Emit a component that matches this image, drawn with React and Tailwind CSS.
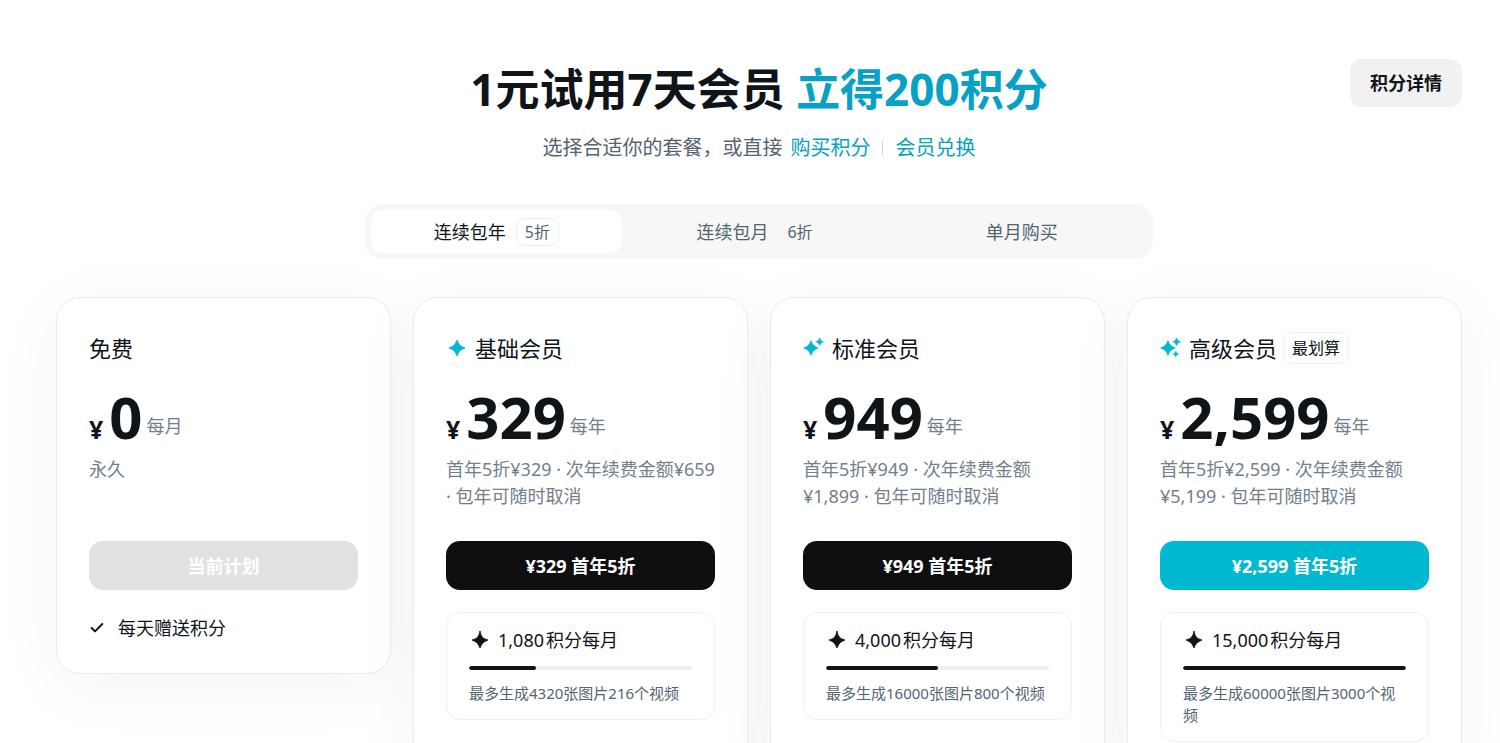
import { Check } from 'lucide-react';

const STAR_LARGE = 'M8 3.6 C9.8 8 11 9.2 15.4 11 C11 12.8 9.8 14 8 18.4 C6.2 14 5 12.8 0.6 11 C5 9.2 6.2 8 8 3.6 Z';
const STAR_TOP = 'M16.6 0.8 C17.4 3.2 18.2 4 20.6 4.8 C18.2 5.6 17.4 6.4 16.6 8.8 C15.8 6.4 15 5.6 12.6 4.8 C15 4 15.8 3.2 16.6 0.8 Z';
const STAR_BOTTOM = 'M15.8 14 C16.4 15.8 17 16.4 18.8 17 C17 17.6 16.4 18.2 15.8 20 C15.2 18.2 14.6 17.6 12.8 17 C14.6 16.4 15.2 15.8 15.8 14 Z';
const STAR_SINGLE = 'M11 3 C13 8 14 9 19 11 C14 13 13 14 11 19 C9 14 8 13 3 11 C8 9 9 8 11 3 Z';
const STAR_CREDIT = 'M11 2 C12 7.6 13.6 9.6 19 11 C14.2 13 13 14.2 11 19 C9 14.2 7.8 13 3 11 C8.4 9.6 10 7.6 11 2 Z';

function Sparkle({ count = 1, credit = false, className }) {
  return (
    <svg
      viewBox="0 0 22 22"
      fill="currentColor"
      stroke="currentColor"
      strokeWidth="0.9"
      strokeLinejoin="round"
      aria-hidden="true"
      className={`size-[22px] shrink-0 ${className}`}
    >
      {count === 1 && <path d={credit ? STAR_CREDIT : STAR_SINGLE} />}
      {count > 1 && <path d={STAR_LARGE} strokeWidth="0.6" />}
      {count > 1 && <path d={STAR_TOP} strokeWidth="0.5" />}
      {count > 2 && <path d={STAR_BOTTOM} strokeWidth="0.5" />}
    </svg>
  );
}

const tabs = [
  { label: '连续包年', badge: '5折', active: true },
  { label: '连续包月', badge: '6折' },
  { label: '单月购买' },
];

const plans = [
  {
    name: '免费',
    price: '0',
    unit: '每月',
    note: ['永久'],
    action: '当前计划',
    disabled: true,
    features: ['每天赠送积分'],
  },
  {
    name: '基础会员',
    stars: 1,
    price: '329',
    unit: '每年',
    note: ['首年5折¥329 · 次年续费金额¥659', '· 包年可随时取消'],
    action: '¥329 首年5折',
    credits: { amount: '1,080', percent: 30, detail: '最多生成4320张图片216个视频' },
  },
  {
    name: '标准会员',
    stars: 2,
    price: '949',
    unit: '每年',
    note: ['首年5折¥949 · 次年续费金额', '¥1,899 · 包年可随时取消'],
    action: '¥949 首年5折',
    credits: { amount: '4,000', percent: 50, detail: '最多生成16000张图片800个视频' },
  },
  {
    name: '高级会员',
    stars: 3,
    tag: '最划算',
    price: '2,599',
    unit: '每年',
    note: ['首年5折¥2,599 · 次年续费金额', '¥5,199 · 包年可随时取消'],
    action: '¥2,599 首年5折',
    highlight: true,
    credits: { amount: '15,000', percent: 100, detail: '最多生成60000张图片3000个视频' },
  },
];

function PlanButton({ plan }) {
  let tone = 'bg-[#0f0f11]';
  if (plan.disabled) tone = 'bg-[#e1e2e4]';
  if (plan.highlight) tone = 'bg-[#00b9d0]';
  return (
    <button
      type="button"
      disabled={plan.disabled}
      className={`mt-[31px] h-[49px] w-full rounded-[14px] text-lg font-bold text-white ${tone}`}
    >
      {plan.action}
    </button>
  );
}

function Credits({ credits }) {
  return (
    <div className="mt-[22px] rounded-[14px] border border-[#f1f1f2] px-[22px] py-[15px]">
      <div className="flex h-6 items-center text-lg">
        <Sparkle credit className="mr-[7px]" />
        <span className="mr-0.5">{credits.amount}</span>
        <span>积分每月</span>
      </div>
      <div className="mt-3.5 h-1 overflow-hidden rounded-full bg-[#efefef]">
        <div className="h-full rounded-full bg-[#0f1419]" style={{ width: `${credits.percent}%` }} />
      </div>
      <p className="mt-3 text-[15px] leading-[22px] text-[#536471]">{credits.detail}</p>
    </div>
  );
}

function PlanCard({ plan }) {
  return (
    <article
      className={`rounded-3xl border border-[#ebebec] bg-white px-8 pt-[34px] pb-[31px] shadow-[0_12px_72px_rgba(0,0,0,0.045)] ${plan.credits ? '' : 'self-start'}`}
    >
      <div className="flex h-8 items-center">
        {plan.stars && <Sparkle count={plan.stars} className="mr-[7px] text-[#00b8d0]" />}
        <h2 className="text-[22px] leading-8 whitespace-nowrap">{plan.name}</h2>
        {plan.tag && (
          <span className="ml-1.5 flex h-8 items-center rounded-lg border border-[#f1f1f2] px-2 text-base whitespace-nowrap">
            {plan.tag}
          </span>
        )}
      </div>

      <div className="mt-[25px] flex items-end">
        <span className="mr-1.5 text-[25px] leading-8 font-bold">¥</span>
        <span className="text-[58px] leading-[56px] font-bold">{plan.price}</span>
        <span className="ml-1 text-lg leading-[38px] text-[#71808c]">{plan.unit}</span>
      </div>

      <p className="mt-[11px] min-h-[54px] text-lg leading-[27px] whitespace-nowrap text-[#71808c]">
        {plan.note.map((line) => (
          <span key={line} className="block">
            {line}
          </span>
        ))}
      </p>

      <PlanButton plan={plan} />

      {plan.credits && <Credits credits={plan.credits} />}

      {plan.features && (
        <ul className="mt-6">
          {plan.features.map((feature) => (
            <li key={feature} className="flex h-7 items-center gap-[13px] text-lg">
              <Check size={16} strokeWidth={3} aria-hidden="true" />
              {feature}
            </li>
          ))}
        </ul>
      )}
    </article>
  );
}

export default function App() {
  return (
    <main className="bg-white pt-[59px] pr-[38px] pb-12 pl-14 font-['Noto_Sans','Noto_Sans_CJK_SC',sans-serif] text-[#0f1419]">
      <header className="grid grid-cols-[1fr_auto_1fr] items-start">
        <div className="col-start-2 text-center">
          <h1 className="text-[44px] leading-[60px] font-bold whitespace-nowrap">
            1元试用7天会员 <span className="text-[#06a1c4]">立得200积分</span>
          </h1>
          <div className="mt-[15px] flex items-center justify-center text-xl leading-7 text-[#536471]">
            <span className="mr-2">选择合适你的套餐，或直接</span>
            <a href="#credits" className="text-[#06a1c4]">
              购买积分
            </a>
            <span className="mx-3 h-3.5 w-px bg-[#cfd3d8]" />
            <a href="#redeem" className="text-[#06a1c4]">
              会员兑换
            </a>
          </div>
        </div>
        <button type="button" className="h-12 justify-self-end rounded-xl bg-[#f1f1f1] px-5 text-lg font-bold">
          积分详情
        </button>
      </header>

      <nav
        role="tablist"
        className="mx-auto mt-[42px] grid max-w-[788px] grid-cols-3 gap-3 rounded-[18px] bg-[#f7f7f7] p-1.5"
      >
        {tabs.map((tab) => (
          <button
            key={tab.label}
            type="button"
            role="tab"
            aria-selected={Boolean(tab.active)}
            className={`flex h-[43px] items-center justify-center gap-2.5 rounded-xl text-lg ${tab.active ? 'bg-white text-[#0f1419]' : 'text-[#536471]'}`}
          >
            {tab.label}
            {tab.badge && (
              <span className="flex h-7 items-center rounded-lg border border-[#f0f0f1] px-2 text-base text-[#536471]">
                {tab.badge}
              </span>
            )}
          </button>
        ))}
      </nav>

      <section className="mt-[38px] grid grid-cols-4 gap-[22px]">
        {plans.map((plan) => (
          <PlanCard key={plan.name} plan={plan} />
        ))}
      </section>
    </main>
  );
}
